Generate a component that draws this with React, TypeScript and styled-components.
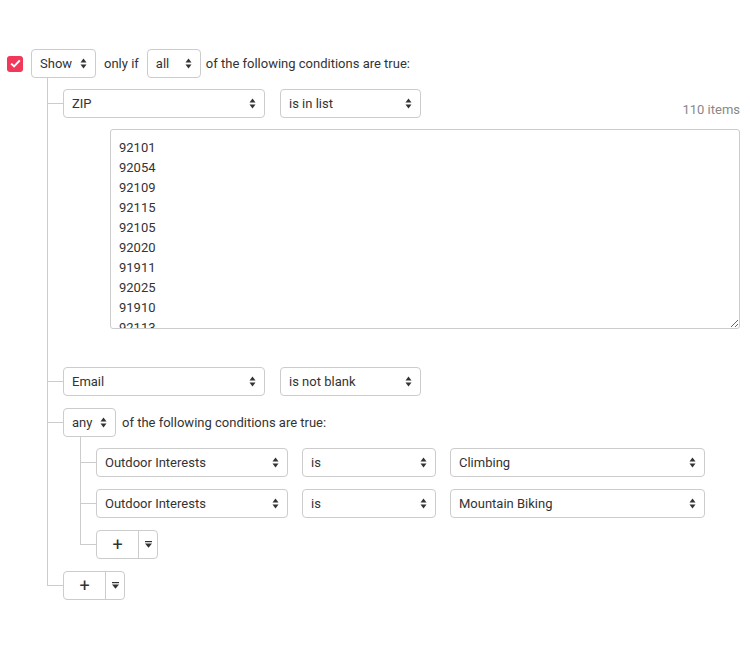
import React from 'react';
import styled, { createGlobalStyle } from 'styled-components';

const GlobalStyle = createGlobalStyle`
  html, body {
    margin: 0;
    padding: 0;
    background: #fff;
  }
  body {
    font-family: Roboto, 'Liberation Sans', Arial, sans-serif;
    font-size: 13px;
    color: #333;
  }
`;

const Page = styled.div`
  padding: 49px 10px 40px 7px;
`;

const Header = styled.div`
  display: flex;
  align-items: center;
  height: 29px;
`;

const Checkbox = styled.span`
  display: inline-flex;
  align-items: center;
  justify-content: center;
  width: 16px;
  height: 16px;
  margin-right: 8px;
  border-radius: 3px;
  background: #f2385a;
`;

const Label = styled.span<{ space?: number }>`
  white-space: nowrap;
  line-height: 29px;
  margin: 0 ${(p) => p.space ?? 6}px;
`;

const SelectBox = styled.div<{ width: number }>`
  box-sizing: border-box;
  display: flex;
  align-items: center;
  justify-content: space-between;
  flex: none;
  width: ${(p) => p.width}px;
  height: 29px;
  padding: 0 8px 0 8px;
  border: 1px solid #ccc;
  border-radius: 4px;
  background: #fff;
  color: #333;
  white-space: nowrap;
`;

const Branch = styled.div<{ indent: number }>`
  margin-left: ${(p) => p.indent}px;
`;

const Item = styled.div`
  position: relative;
  padding: 12px 0 0 16px;

  &::before {
    content: '';
    position: absolute;
    left: 0;
    top: 0;
    bottom: 0;
    border-left: 1px solid #ccc;
  }

  &::after {
    content: '';
    position: absolute;
    left: 0;
    top: 26px;
    width: 16px;
    border-top: 1px solid #ccc;
  }

  &:first-child {
    padding-top: 11px;
  }

  &:first-child::after {
    top: 25px;
  }

  &:last-child::before {
    bottom: auto;
    height: 26px;
  }
`;

const Row = styled.div<{ gap?: number }>`
  display: flex;
  align-items: center;
  gap: ${(p) => p.gap ?? 15}px;
`;

const ListRow = styled(Row)`
  align-items: flex-end;
`;

const Count = styled.span`
  margin-left: auto;
  color: #888;
  line-height: 15px;
  padding-bottom: 1px;
`;

const Values = styled.div`
  padding: 11px 0 26px 47px;
`;

const ValuesArea = styled.textarea`
  box-sizing: border-box;
  display: block;
  width: 100%;
  height: 200px;
  margin: 0;
  padding: 8px 8px;
  border: 1px solid #ccc;
  border-radius: 3px;
  font-family: Roboto, 'Liberation Sans', Arial, sans-serif;
  font-size: 13px;
  line-height: 20px;
  color: #333;
  resize: vertical;
  overflow: hidden;
  outline: none;
`;

const GroupHead = styled.div`
  display: flex;
  align-items: center;
`;

const AddGroup = styled.div`
  display: inline-flex;
  height: 29px;
  box-sizing: border-box;
  border: 1px solid #ccc;
  border-radius: 4px;
  background: #fff;
  overflow: hidden;
`;

const AddButton = styled.button`
  width: 41px;
  border: none;
  background: transparent;
  padding: 0;
  font-family: Roboto, 'Liberation Sans', Arial, sans-serif;
  font-size: 18px;
  line-height: 1;
  color: #333;
`;

const MenuButton = styled.button`
  display: flex;
  align-items: center;
  justify-content: center;
  width: 19px;
  border: none;
  border-left: 1px solid #ccc;
  background: transparent;
  padding: 0;
`;

const Arrows = () => (
  <svg width="7" height="11" viewBox="0 0 7 11" aria-hidden>
    <path d="M3.5 0.5 L6.5 4.5 L0.5 4.5 Z" fill="#333" />
    <path d="M0.5 6.5 L6.5 6.5 L3.5 10.5 Z" fill="#333" />
  </svg>
);

const Select: React.FC<{ width: number; value: string }> = ({ width, value }) => (
  <SelectBox width={width}>
    <span>{value}</span>
    <Arrows />
  </SelectBox>
);

const AddControl = () => (
  <AddGroup>
    <AddButton type="button">+</AddButton>
    <MenuButton type="button">
      <svg width="7" height="7" viewBox="0 0 7 7" aria-hidden>
        <rect x="0" y="0" width="7" height="1.2" fill="#333" />
        <path d="M0 2.4 L7 2.4 L3.5 6.8 Z" fill="#333" />
      </svg>
    </MenuButton>
  </AddGroup>
);

const zips = [
  '92101', '92054', '92109', '92115', '92105', '92020', '91911', '92025', '91910', '92113',
  '92071', '92019', '92064', '92126', '92117',
];

const App: React.FC = () => (
  <Page>
    <GlobalStyle />
    <Header>
      <Checkbox>
        <svg width="11" height="9" viewBox="0 0 11 9" aria-hidden>
          <path d="M1.2 4.6 L4.1 7.4 L9.8 1.4" fill="none" stroke="#fff" strokeWidth="2" />
        </svg>
      </Checkbox>
      <Select width={65} value="Show" />
      <Label space={8}>only if</Label>
      <Select width={54} value="all" />
      <Label space={5}>of the following conditions are true:</Label>
    </Header>

    <Branch indent={40}>
      <Item>
        <ListRow>
          <Select width={202} value="ZIP" />
          <Select width={141} value="is in list" />
          <Count>110 items</Count>
        </ListRow>
        <Values>
          <ValuesArea readOnly value={zips.join('\n')} />
        </Values>
      </Item>
      <Item>
        <Row>
          <Select width={202} value="Email" />
          <Select width={141} value="is not blank" />
        </Row>
      </Item>
      <Item>
        <GroupHead>
          <Select width={53} value="any" />
          <Label>of the following conditions are true:</Label>
        </GroupHead>
        <Branch indent={17}>
          <Item>
            <Row gap={14}>
              <Select width={192} value="Outdoor Interests" />
              <Select width={134} value="is" />
              <Select width={255} value="Climbing" />
            </Row>
          </Item>
          <Item>
            <Row gap={14}>
              <Select width={192} value="Outdoor Interests" />
              <Select width={134} value="is" />
              <Select width={255} value="Mountain Biking" />
            </Row>
          </Item>
          <Item>
            <AddControl />
          </Item>
        </Branch>
      </Item>
      <Item>
        <AddControl />
      </Item>
    </Branch>
  </Page>
);

export default App;
